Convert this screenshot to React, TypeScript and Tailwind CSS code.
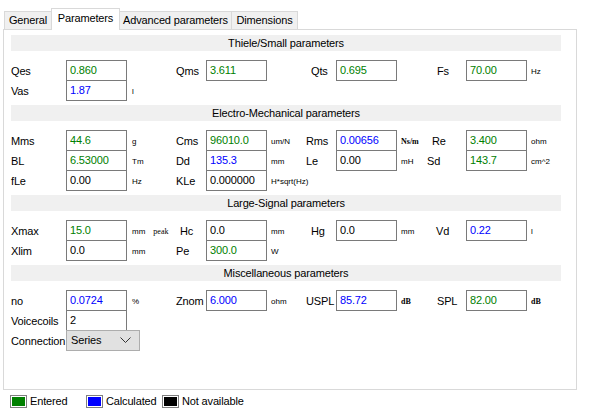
import React from "react";

type Clr = "g" | "b" | "k";
type Cell = {
  l: string;
  lp?: string;
  v: string;
  c: Clr;
  u?: React.ReactNode;
} | null;

const labelW = ["w-[55px]", "w-[30px]", "w-[30px]", "w-[39px]"];
const unitW = ["w-[49px] pl-[5px]", "w-[39px] pl-[4px]", "w-[30px] pl-[4px]", "w-[40px] pl-[4px]"];
const colorCls: Record<Clr, string> = {
  g: "text-[#008000]",
  b: "text-[#0000ff]",
  k: "text-black",
};

function Group({ cell, i }: { cell: Cell; i: number }) {
  if (!cell) {
    return (
      <div className="flex h-[20px]">
        <div className={labelW[i]} />
        <div className="w-[61px]" />
        <div className={unitW[i]} />
      </div>
    );
  }
  return (
    <div className="flex h-[20px]">
      <div className={`${labelW[i]} ${cell.lp ?? ""} h-[20px] flex items-center pt-[3px] whitespace-nowrap`}>
        {cell.l}
      </div>
      <div
        className={`w-[61px] h-[21px] shrink-0 border border-[#7a7a7a] bg-white flex items-center pl-[3px] pb-[1px] ${colorCls[cell.c]}`}
      >
        {cell.v}
      </div>
      <div className={`${unitW[i]} h-[20px] flex items-center pt-[3px] text-[8px] tracking-normal whitespace-nowrap`}>
        {cell.u}
      </div>
    </div>
  );
}

function Row({ cells }: { cells: Cell[] }) {
  return (
    <div className="flex h-[20px]">
      {[0, 1, 2, 3].map((i) => (
        <Group key={i} cell={cells[i] ?? null} i={i} />
      ))}
    </div>
  );
}

function Header({ title, first }: { title: string; first?: boolean }) {
  return (
    <div
      className={`${first ? "" : "mt-[5px]"} h-[16px] w-[550px] bg-[#f0f0f0] flex items-center justify-center`}
    >
      {title}
    </div>
  );
}

function LegendItem({ color, label, w }: { color: string; label: string; w: string }) {
  return (
    <div className={`${w} flex items-center gap-[3px]`}>
      <div className="w-[17px] h-[13px] border border-[#7f7f7f] bg-white p-px">
        <div className={`w-full h-full ${color}`} />
      </div>
      <span>{label}</span>
    </div>
  );
}

export default function App() {
  return (
    <div className="w-[589px] h-[415px] bg-white text-[11px] tracking-[-0.15px] text-black font-['Liberation_Sans',Arial,sans-serif] overflow-hidden leading-none">
      {/* Tabs */}
      <div className="relative z-10 flex items-end pl-[4px] h-[30px]">
        <div className="mb-px h-[18px] w-[48px] border border-b-0 border-[#d9d9d9] bg-[#f0f0f0] flex items-center justify-center">
          General
        </div>
        <div className="-ml-px h-[22px] w-[69px] border border-b-0 border-[#d9d9d9] bg-white flex items-center justify-center pb-[3px]">
          Parameters
        </div>
        <div className="-ml-px mb-px h-[18px] w-[113px] border border-b-0 border-[#d9d9d9] bg-[#f0f0f0] flex items-center justify-center">
          Advanced parameters
        </div>
        <div className="-ml-px mb-px h-[18px] w-[67px] border border-b-0 border-[#d9d9d9] bg-[#f0f0f0] flex items-center justify-center">
          Dimensions
        </div>
      </div>

      {/* Panel */}
      <div className="-mt-px ml-[3px] w-[574px] h-[361px] border border-[#d9d9d9] pl-[7px] pt-[5px] bg-white">
        <Header title="Thiele/Small parameters" first />
        <div className="mt-[9px] flex flex-col">
          <Row
            cells={[
              { l: "Qes", v: "0.860", c: "g" },
              { l: "Qms", v: "3.611", c: "g" },
              { l: "Qts", lp: "pl-[5px]", v: "0.695", c: "g" },
              { l: "Fs", lp: "pl-[10px]", v: "70.00", c: "g", u: "Hz" },
            ]}
          />
          <Row cells={[{ l: "Vas", v: "1.87", c: "b", u: "l" }]} />
        </div>

        <Header title="Electro-Mechanical parameters" />
        <div className="mt-[9px] flex flex-col">
          <Row
            cells={[
              { l: "Mms", v: "44.6", c: "g", u: "g" },
              { l: "Cms", v: "96010.0", c: "g", u: "um/N" },
              { l: "Rms", v: "0.00656", c: "b", u: <span className="font-['Liberation_Serif'] font-bold">Ns/m</span> },
              { l: "Re", lp: "pl-[5px]", v: "3.400", c: "g", u: "ohm" },
            ]}
          />
          <Row
            cells={[
              { l: "BL", v: "6.53000", c: "g", u: "Tm" },
              { l: "Dd", v: "135.3", c: "b", u: "mm" },
              { l: "Le", v: "0.00", c: "k", u: "mH" },
              { l: "Sd", v: "143.7", c: "g", u: "cm^2" },
            ]}
          />
          <Row
            cells={[
              { l: "fLe", v: "0.00", c: "k", u: "Hz" },
              { l: "KLe", v: "0.000000", c: "k", u: "H*sqrt(Hz)" },
            ]}
          />
        </div>

        <Header title="Large-Signal parameters" />
        <div className="mt-[9px] flex flex-col">
          <Row
            cells={[
              {
                l: "Xmax",
                v: "15.0",
                c: "g",
                u: (
                  <>
                    <span>mm</span>
                    <span className="ml-[8px] font-['Liberation_Serif']">peak</span>
                  </>
                ),
              },
              { l: "Hc", lp: "pl-[4px]", v: "0.0", c: "k", u: "mm" },
              { l: "Hg", lp: "pl-[5px]", v: "0.0", c: "k", u: "mm" },
              { l: "Vd", lp: "pl-[9px]", v: "0.22", c: "b", u: "l" },
            ]}
          />
          <Row
            cells={[
              { l: "Xlim", v: "0.0", c: "k", u: "mm" },
              { l: "Pe", v: "300.0", c: "g", u: "W" },
            ]}
          />
        </div>

        <Header title="Miscellaneous parameters" />
        <div className="mt-[9px] flex flex-col">
          <Row
            cells={[
              { l: "no", v: "0.0724", c: "b", u: "%" },
              { l: "Znom", v: "6.000", c: "b", u: "ohm" },
              { l: "USPL", v: "85.72", c: "b", u: <span className="font-['Liberation_Serif'] font-bold">dB</span> },
              { l: "SPL", lp: "pl-[10px]", v: "82.00", c: "g", u: <span className="font-['Liberation_Serif'] font-bold">dB</span> },
            ]}
          />
          <Row cells={[{ l: "Voicecoils", v: "2", c: "k" }]} />
          <div className="flex h-[20px]">
            <div className="w-[55px] h-[20px] flex items-center pt-[3px] whitespace-nowrap">Connection</div>
            <div className="w-[74px] h-[21px] border border-[#adadad] bg-[#e1e1e1] flex items-center justify-between pl-[4px] pr-[8px] pb-[1px]">
              <span>Series</span>
              <svg width="11" height="6" viewBox="0 0 11 6">
                <path d="M0.5 0.5 L5.5 5.5 L10.5 0.5" fill="none" stroke="#333" strokeWidth="1" />
              </svg>
            </div>
          </div>
        </div>
      </div>

      {/* Legend */}
      <div className="mt-[5px] flex items-center pl-[10px] h-[13px]">
        <LegendItem color="bg-[#008000]" label="Entered" w="w-[76px]" />
        <LegendItem color="bg-[#0000ff]" label="Calculated" w="w-[76px]" />
        <LegendItem color="bg-black" label="Not available" w="w-[100px]" />
      </div>
    </div>
  );
}
